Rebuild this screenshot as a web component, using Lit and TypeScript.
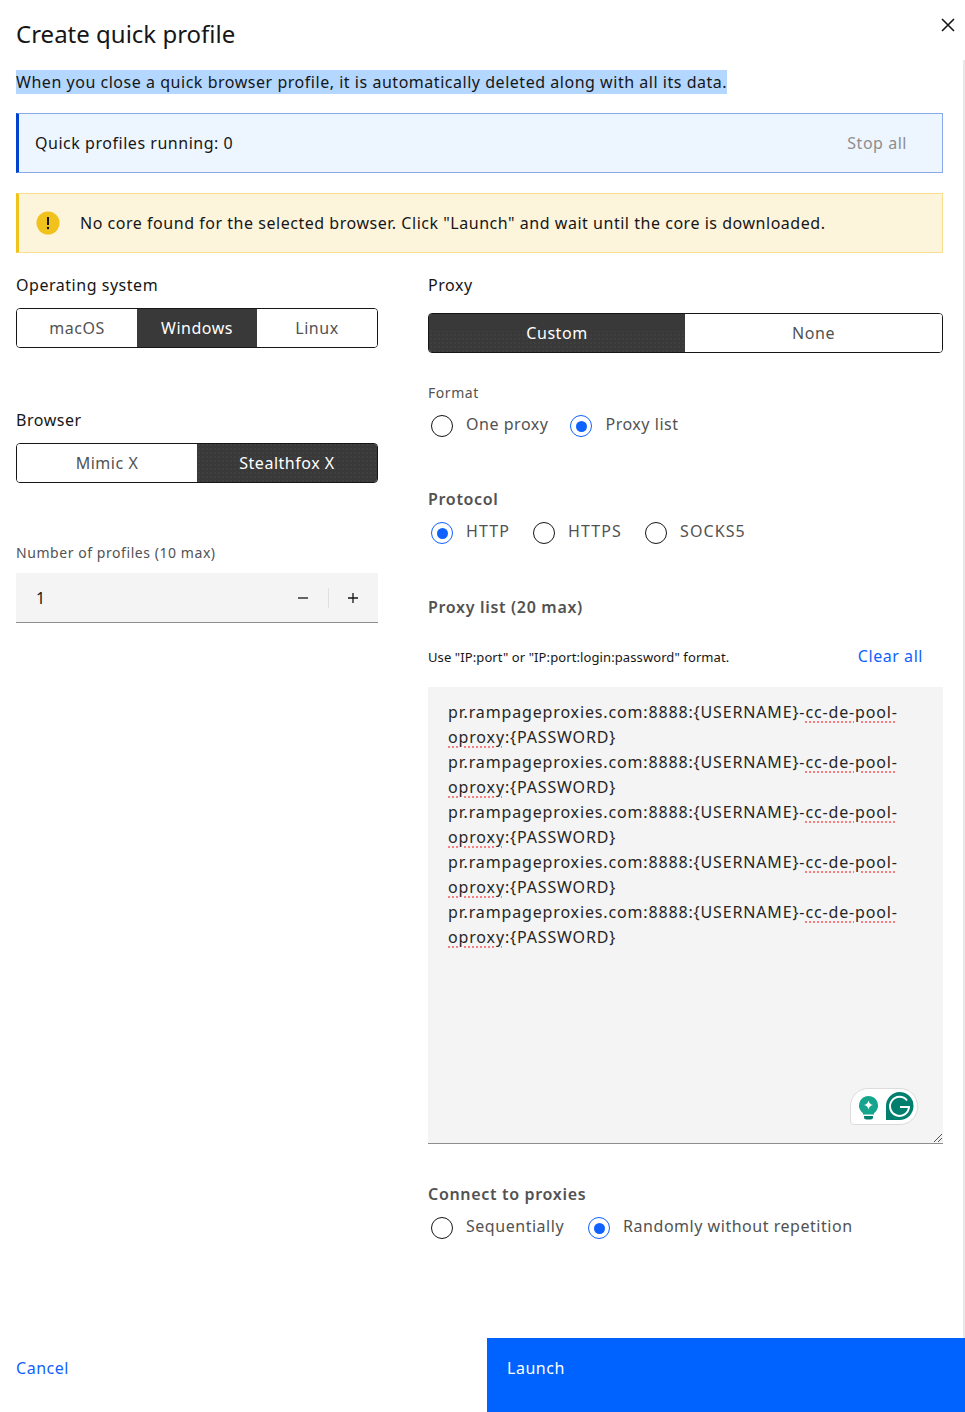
import { LitElement, html, css } from "lit";
import { customElement } from "lit/decorators.js";

const radio = (label: string, on = false) => html`<label class="radio"><span class="dot ${on ? "on" : ""}"></span><span>${label}</span></label>`;

@customElement("app-root")
export class AppRoot extends LitElement {
  static styles = css`
    :host { display: block; position: relative; height: 1412px; overflow: hidden; background: #fff; color: #161616;
      font-family: "Noto Sans", sans-serif; font-size: 16px; letter-spacing: 0.53px; }
    * { box-sizing: border-box; }
    .head { display: flex; justify-content: space-between; padding: 19px 9px 0 16px; height: 70px; }
    h1 { margin: 0; font-size: 24px; font-weight: 400; line-height: 29px; letter-spacing: 0; }
    .x { width: 16px; height: 16px; margin-top: -2px; }
    .sub { margin: 0 16px; height: 24px; line-height: 24px; }
    .sub span { display: inline-block; background: #b3d7ff; }
    .note { margin: 19px 22px 0 16px; height: 60px; display: flex; align-items: center; border: 1px solid; border-left-width: 3px; }
    .info { background: #edf5ff; border-color: #8aa9ec; border-left-color: #0043ce; padding: 0 35px 0 16px; justify-content: space-between; }
    .stop { color: #8d8d8d; }
    .warn { margin-top: 20px; background: #fdf4dc; border-color: #f8e08e; border-left-color: #f1c21b; padding: 0 0 0 17px; gap: 20px; }
    .warn svg { width: 24px; height: 24px; flex: none; }
    .cols { display: grid; grid-template-columns: 362px 515px; gap: 50px; padding: 21px 22px 0 16px; }
    .col { display: flex; flex-direction: column; }
    .lab { line-height: 22px; height: 22px; }
    .switch { display: flex; height: 40px; border: 1px solid #161616; border-radius: 4px; overflow: hidden; color: #525252; }
    .switch > div { flex: 1; display: flex; align-items: center; justify-content: center; background: #fff; }
    .switch > .sel { background: #393939; color: #fff; margin: -1px 0; }
    .switch > .half { flex: 0 0 256px; }
    .switch > .sel.tex { background-color: #393939; background-image: radial-gradient(circle, #404040 0.7px, transparent 0.8px); background-size: 4px 4px; }
    .switch > .sel.tex.half { background-image: linear-gradient(#393939 45%, transparent 45%), radial-gradient(circle, #404040 0.7px, transparent 0.8px); background-size: 100% 100%, 4px 4px; }
    .small { font-size: 14px; color: #525252; line-height: 20px; letter-spacing: 0.56px; }
    .num { margin-top: 10px; height: 50px; background: #f4f4f4; border-bottom: 1px solid #8d8d8d; display: flex; align-items: center; padding-left: 20px; font-size: 16px; }
    .num .v { flex: 1; }
    .num .btn { width: 50px; height: 20px; display: flex; align-items: center; justify-content: center; }
    .num .btn.last { width: 49px; padding-right: 1px; }
    .num .btn svg { width: 12px; height: 12px; }
    .num .sep { width: 1px; height: 20px; background: #e0e0e0; }
    .radios { display: flex; color: #525252; }
    .radios.wide { letter-spacing: 1.1px; }
    .radio { display: flex; align-items: flex-start; line-height: 22px; height: 24px; }
    .dot { width: 22px; height: 22px; margin: 2px 13px 0 3px; border: 1.5px solid #161616; border-radius: 50%; flex: none; display: flex; align-items: center; justify-content: center; }
    .dot.on { border: 1.5px solid #0f62fe; }
    .dot.on::after { content: ""; width: 11px; height: 11px; border-radius: 50%; background: #0f62fe; }
    .strong { font-weight: 600; color: #525252; line-height: 22px; height: 22px; letter-spacing: 0.68px; }
    .help { display: flex; justify-content: space-between; align-items: center; padding-right: 20px; height: 24px; font-size: 13px; letter-spacing: 0.1px; }
    .link { color: #0f62fe; font-size: 16px; letter-spacing: 0.55px; margin-top: -2px; }
    .area { position: relative; height: 457px; margin-top: 18px; background: #f4f4f4; border-bottom: 1px solid #8d8d8d; padding: 13px 20px; line-height: 25px; color: #262626; letter-spacing: 0.85px; }
    .area u { text-decoration: underline dotted #f57f7f 2px; text-underline-offset: 3px; }
    .gram { position: absolute; left: 422px; top: 401px; width: 68px; height: 37px; background: #fff; border: 1px solid #dcdcdc; border-radius: 18px 18px 18px 4px; }
    .gram svg { display: block; width: 66px; height: 35px; }
    .grip { position: absolute; right: 1px; bottom: 1px; width: 8px; height: 8px; }
    .foot { position: absolute; left: 0; right: 0; bottom: 0; height: 74px; display: flex; justify-content: space-between; }
    .cancel { padding: 19px 0 0 16px; color: #0f62fe; line-height: 22px; }
    .launch { width: 478px; background: #0062ff; color: #fff; padding: 19px 20px; line-height: 22px; }
    .track { position: absolute; top: 60px; right: 0; bottom: 74px; width: 2px; background: #e8e8e8; }
  `;

  private line() {
    return html`pr.rampageproxies.com:8888:{USERNAME}-<u>cc-de-pool-</u><br /><u>oproxy</u>:{PASSWORD}<br />`;
  }

  render() {
    return html`
      <div class="head">
        <h1>Create quick profile</h1>
        <svg class="x" viewBox="0 0 16 16"><path d="M2 2 14 14M14 2 2 14" stroke="#161616" stroke-width="1.6" fill="none" /></svg>
      </div>
      <div class="sub"><span>When you close a quick browser profile, it is automatically deleted along with all its data.</span></div>
      <div class="note info"><span>Quick profiles running: 0</span><span class="stop">Stop all</span></div>
      <div class="note warn">
        <svg viewBox="0 0 24 24"><circle cx="12" cy="12" r="11.5" fill="#f1c21b" /><path d="M12 6v8" stroke="#161616" stroke-width="2" /><circle cx="12" cy="17" r="1.2" fill="#161616" /></svg>
        <span>No core found for the selected browser. Click "Launch" and wait until the core is downloaded.</span>
      </div>
      <div class="cols">
        <div class="col">
          <div class="lab">Operating system</div>
          <div class="switch" style="margin-top:12px"><div>macOS</div><div class="sel">Windows</div><div>Linux</div></div>
          <div class="lab" style="margin-top:61px">Browser</div>
          <div class="switch" style="margin-top:12px"><div>Mimic X</div><div class="sel tex">Stealthfox X</div></div>
          <div class="small" style="margin-top:60px">Number of profiles (10 max)</div>
          <div class="num"><span class="v">1</span>
            <span class="btn"><svg viewBox="0 0 12 12"><path d="M1 6h10" stroke="#161616" stroke-width="1.3" /></svg></span>
            <span class="sep"></span>
            <span class="btn last"><svg viewBox="0 0 12 12"><path d="M1 6h10M6 1v10" stroke="#161616" stroke-width="1.3" /></svg></span>
          </div>
        </div>
        <div class="col">
          <div class="lab">Proxy</div>
          <div class="switch" style="margin-top:17px"><div class="sel tex half">Custom</div><div>None</div></div>
          <div class="small" style="margin-top:30px">Format</div>
          <div class="radios" style="margin-top:10px;gap:19px">${radio("One proxy")}${radio("Proxy list", true)}</div>
          <div class="strong" style="margin-top:51px">Protocol</div>
          <div class="radios wide" style="margin-top:10px;gap:20px">${radio("HTTP", true)}${radio("HTTPS")}${radio("SOCKS5")}</div>
          <div class="strong" style="margin-top:52px">Proxy list (20 max)</div>
          <div class="help" style="margin-top:27px"><span>Use "IP:port" or "IP:port:login:password" format.</span><span class="link">Clear all</span></div>
          <div class="area">
            ${this.line()}${this.line()}${this.line()}${this.line()}${this.line()}
            <div class="gram"><svg viewBox="0 0 66 35">
              <path d="M17.5 7a9.500 9.500 0 0 0-5.500 17.200V25.500h11v-1.300A9.500 9.500 0 0 0 17.500 7Z" fill="#15a58d" />
              <path d="M13 27h9v1a2.500 2.500 0 0 1-2.500 2.500h-4A2.500 2.500 0 0 1 13 28Z" fill="#007f6e" />
              <path d="M17.500 11.500q.8 3.700 4.500 4.500-3.700.8-4.500 4.500-.8-3.700-4.500-4.500 3.700-.8 4.500-4.500Z" fill="#fff" />
              <path d="M48.500 3a14 14 0 1 1 0 28H35V17A14 14 0 0 1 48.500 3Z" fill="#007f6e" />
              <path d="M56 11.500A9.500 9.500 0 1 0 58 18H49" fill="none" stroke="#fff" stroke-width="2" />
            </svg></div>
            <svg class="grip" viewBox="0 0 8 8"><path d="M0 8 8 0M4 8 8 4" stroke="#525252" stroke-width="1" /></svg>
          </div>
          <div class="strong" style="margin-top:39px">Connect to proxies</div>
          <div class="radios" style="margin-top:10px;gap:21px">${radio("Sequentially")}${radio("Randomly without repetition", true)}</div>
        </div>
      </div>
      <div class="foot"><div class="cancel">Cancel</div><div class="launch">Launch</div></div>
      <div class="track"></div>
    `;
  }
}
